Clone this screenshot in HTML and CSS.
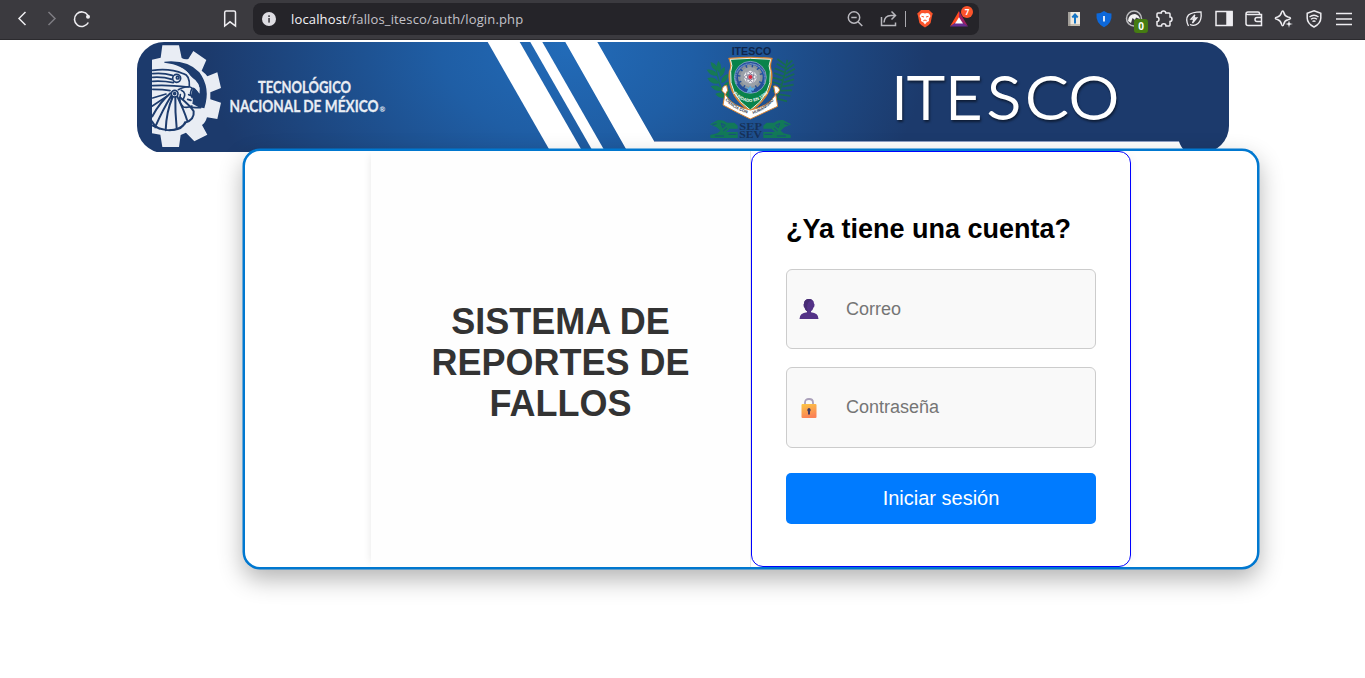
FILE: index.html
```html
<!DOCTYPE html>
<html lang="es">
<head>
<meta charset="utf-8">
<title>Sistema de reportes de fallos</title>
<link rel="stylesheet" href="styles.css">
</head>
<body>
<header class="toolbar">
  <div class="nav">
    <svg class="icon" viewBox="0 0 20 20"><path d="M13.5 4 L7 10.500 L13.500 17" transform="translate(0 -1)"/></svg>
    <svg class="icon dim" viewBox="0 0 20 20"><path d="M6.500 3 L13 9.500 L6.500 16"/></svg>
    <svg class="icon" viewBox="0 0 20 20"><path d="M16.300 13.500 A7.300 7.300 0 1 1 15.800 6.100" stroke-width="1.600"/><circle cx="16" cy="7.800" r="2" class="fill" stroke="none"/></svg>
  </div>
  <svg class="icon" viewBox="0 0 20 20"><path d="M4.700 3.500 Q4.700 2 6.200 2 H14 Q15.500 2 15.500 3.500 V17 L10 12.800 L4.700 17 Z"/></svg>
  <div class="urlbar">
    <svg class="info" viewBox="0 0 14 14"><circle cx="7" cy="7" r="7" fill="#dedde2"/><rect x="6.200" y="6" width="1.700" height="4.600" fill="#4a494f"/><rect x="6.200" y="3.300" width="1.700" height="1.700" fill="#4a494f"/></svg>
    <p class="url"><span class="host">localhost</span>/fallos_itesco/auth/login.php</p>
    <div class="urltools">
      <svg class="icon soft" viewBox="0 0 20 20"><circle cx="9" cy="8.500" r="5.700"/><path d="M6.300 8.500 H11.700 M13 12.800 L17.300 17"/></svg>
      <svg class="icon soft" viewBox="0 0 20 20"><path d="M2.500 8 V16.500 H16.500 V13.500 M5 13.500 Q5.500 6.500 12 6.500 H16.500 M12.500 2.500 L16.500 6.500 L12.500 10.500"/></svg>
      <span class="divider"></span>
      <svg class="icon" viewBox="0 0 20 20"><path d="M6 1 H14 L16 3 L17.800 4.500 L17 7 L15.600 14 Q14.500 16 10 18.500 Q5.500 16 4.400 14 L3 7 L2.200 4.500 L4 3 Z" fill="#fb542b" stroke="none"/><path d="M6 4.500 L8 4 L10 4.600 L12 4 L14 4.500 L15.500 7 L13.800 10 L14 12 L11.500 13.500 L10 15.500 L8.500 13.500 L6 12 L6.200 10 L4.500 7 Z" fill="#fff" stroke="none"/><path d="M6.500 7.300 L9 8 M13.500 7.300 L11 8 M8.300 11.800 L10 11 L11.700 11.800" stroke="#fb542b" stroke-width="1"/></svg>
      <span class="rewards"><svg class="icon" viewBox="0 0 20 20"><path d="M10 2 L1 17.500 L10 12 Z" fill="#ff4a20" stroke="none"/><path d="M10 2 L19 17.500 L10 12 Z" fill="#9e1f63" stroke="none"/><path d="M1 17.500 H19 L10 11 Z" fill="#662d91" stroke="none"/><path d="M10 8.300 L14 14.500 H6 Z" fill="#fff" stroke="none"/></svg><b class="badge">7</b></span>
    </div>
  </div>
  <div class="extensions">
    <svg class="icon" viewBox="0 0 20 20"><path d="M4 3 H16 V17 H4 Z" fill="#eee9df" stroke="none"/><path d="M4 3 H6.500 V17 H4 Z" fill="#a3a09b" stroke="none"/><path d="M4 16 H16" stroke="#9b9384" stroke-width="1"/><path d="M11 14.500 V6 M8.300 8.500 L11 5.500 L13.700 8.500" stroke="#1675c4" stroke-width="2"/></svg>
    <svg class="icon" viewBox="0 0 20 20"><path d="M10 2 Q13.500 4.500 17.500 4.500 Q18.500 14 10 18.300 Q1.500 14 2.500 4.500 Q6.500 4.500 10 2 Z" fill="#0d68da" stroke="none"/><path d="M10 7 V12.500" stroke="#fff" stroke-width="1.700"/></svg>
    <span class="counter"><svg class="icon" viewBox="0 0 20 20"><circle cx="10" cy="9.500" r="7.500" stroke="#bdbdc0"/><path d="M4 12 Q4.500 5 11 5 Q15 6 16 10 L12 8.500 L11 11 L8.500 9 L7 14 Z" fill="#f3f3f3" stroke="none"/></svg><b class="count">0</b></span>
    <svg class="icon" viewBox="0 0 20 20"><path d="M4 4 H7.300 Q7.300 2 9.500 2 Q11.700 2 11.700 4 H15 Q16 4 16 5 V8 Q18 8 18 10.200 Q18 12.400 16 12.400 V16 Q16 17 15 17 H12 Q12 14.800 9.800 14.800 Q7.500 14.800 7.500 17 H4 Q3 17 3 16 V12.700 Q5 12.500 5 10.300 Q5 8.200 3 8 V5 Q3 4 4 4 Z"/></svg>
    <svg class="icon" viewBox="0 0 20 20"><path d="M4.500 17 Q1 10 4.500 6 Q8 3 17 2.800 Q18 11 14 14.500 Q10.500 17.500 6 15.500 M10.800 5.800 L7 10.200 H10 L8.500 14 L12.800 9 H9.900 Z" stroke-width="1.300"/></svg>
    <svg class="icon" viewBox="0 0 20 20"><path d="M2 2.500 H18 V16.500 H2 Z"/><path d="M13 3 H18 V16 H13 Z" class="fill"/></svg>
    <svg class="icon" viewBox="0 0 20 20"><path d="M15.500 5.500 V4.500 Q15.500 3 14 3 H4 Q2 3 2 5 V14.500 Q2 16.500 4 16.500 H17.500 V5.500 H4 Q2 5.500 2 4.500 M17.500 8.500 H13 Q11 8.500 11 10.500 Q11 12.500 13 12.500 H17.500"/></svg>
    <svg class="icon" viewBox="0 0 20 20"><path d="M8.700 2 Q9.500 2 9.800 3.500 Q10.500 7 14 8 Q16.500 8.500 16.500 9.300 Q16.500 10 14 10.800 Q10.500 11.500 9.800 15 Q9.500 16.800 8.700 16.800 Q8 16.800 7.500 15 Q6.500 11.500 3.500 10.500 Q1.300 10 1.300 9.300 Q1.300 8.500 3.500 8 Q6.500 7 7.500 3.500 Q8 2 8.700 2 Z"/><path d="M15 11 L16 14 L19 15 L16 16 L15 19 L14 16 L11 15 L14 14 Z" class="fill" stroke="#3b3a3f" stroke-width=".4"/></svg>
    <svg class="icon" viewBox="0 0 20 20"><path d="M10 1.800 L16.800 4.200 V9 Q16.800 14.500 10 18 Q3.200 14.500 3.200 9 V4.200 Z"/><path d="M5.500 8 Q10 4.500 14.500 8 M7 10.300 Q10 8 13 10.300 M8.500 12.500 Q10 11.500 11.500 12.500" stroke-width="1.400"/></svg>
    <svg class="icon" viewBox="0 0 20 20"><path d="M2 4.500 H18 M2 10 H18 M2 15.500 H18"/></svg>
  </div>
</header>

<main class="page">
  <svg class="banner" viewBox="0 0 1092 110">
    <defs>
      <radialGradient id="sky" gradientUnits="userSpaceOnUse" cx="430" cy="5" r="360" gradientTransform="translate(430 5) scale(1 .72) translate(-430 -5)">
        <stop offset="0" stop-color="#226bb8"/><stop offset=".35" stop-color="#1f5ea5"/><stop offset="1" stop-color="#1c3a6c"/>
      </radialGradient>
      <clipPath id="round"><rect width="1092" height="111" rx="27"/></clipPath>
      <path id="arcLow" d="M130 166 Q180 220 240 160"/>
      <path id="arcTop" d="M142 137 A42 42 0 1 1 220 137"/>
      <path id="ribbonL" d="M106 185 Q130 215 180 229"/>
      <path id="ribbonR" d="M189 228 Q232 214 257 180"/>
    </defs>
    <g clip-path="url(#round)">
      <rect width="1092" height="111" fill="url(#sky)"/>
      <g fill="#fff">
        <path d="M350.700 0 H382.700 L445.700 110 H413.700 Z"/>
        <path d="M393.300 0 H405.300 L468.300 110 H456.300 Z"/>
        <path d="M428.300 0 H460.300 L517.300 99.500 H1042 Q1044 106 1050 111 H491.300 Z"/>
      </g>
      <path d="M517 99.500 H1042" stroke="#8d9fc4"/>

      <!-- gear with the eagle warrior -->
      <g transform="translate(-7 -4) scale(.33333)" fill="none" stroke="#1d3c6e" stroke-width="5" stroke-linecap="round">
        <path stroke="none" fill="#e9edf4" d="M97 22 H147 L155 60 Q165 66 175 63 L190 39 L229 66 L215 98 Q228 108 232 115 L262 103 L273 150 L241 163 V184 L273 194 L262 243 L231 238 Q226 255 216 261 L232 290 L193 310 L168 284 L152 291 L147 327 H97 L91 290 L66 286 V65 L92 59 Z"/>
        <path stroke="none" fill="#1d3c6e" d="M103 71 Q172 64 208 103 Q243 150 223 211 Q204 209 187 197 Q191 181 184 173 L188 150 Q193 142 206 164 Q212 150 203 137 Q190 122 180 112 Q160 80 103 74 Z"/>
        <path stroke="none" fill="#e9edf4" d="M120 82 Q166 86 182 116 Q214 133 209 167 Q196 148 181 144 Q178 111 158 108 Q140 95 105 94 Z"/>
        <path d="M68 97 Q120 90 160 107 Q180 112 178 145 M68 107 Q100 104 127 112 M68 118 Q100 116 126 124 M68 130 Q100 128 130 134 M68 143 Q110 140 175 147 M68 154 Q100 154 120 158"/>
        <circle cx="140" cy="121" r="12"/><circle cx="143" cy="119" r="4"/>
        <circle cx="134" cy="167" r="10"/><circle cx="134" cy="167" r="3"/>
        <path d="M145 155 Q175 140 187 151 Q177 165 186 178 M151 170 Q145 195 160 207 Q173 210 186 204 M154 157 Q171 165 160 183 M176 170 L184 173 M173 184 L183 187"/>
        <path d="M121 166 Q88 195 67 235 M124 173 Q98 215 75 268 M128 177 Q109 220 107 277 M136 178 Q135 220 140 270 M142 176 Q163 220 171 246 M150 178 Q184 207 191 220 Q194 244 166 254 M68 263 Q130 293 165 257 M66 250 Q73 265 88 272" stroke-width="6"/>
        <path d="M68 180 L108 168 M67 204 L112 174 M120 276 Q158 278 165 252 M187 208 Q196 209 212 209"/>
      </g>

      <g class="tecnm">
        <text x="121" y="51.300" textLength="93" lengthAdjust="spacingAndGlyphs">TECNOLÓGICO</text>
        <text x="92.500" y="69.600" textLength="149" lengthAdjust="spacingAndGlyphs">NACIONAL DE MÉXICO</text>
        <text class="reg" x="242.500" y="69.600">®</text>
      </g>

      <!-- school crest -->
      <g transform="translate(553 -4) scale(.33333)">
        <text class="crest-name" x="125" y="51" textLength="119" lengthAdjust="spacingAndGlyphs">ITESCO</text>
        <g fill="#167a55">
          <path d="M62 72 Q84 78 82 98 Q62 93 62 72 M85 68 Q100 85 87 104 Q74 88 85 68 M50 95 Q74 91 84 113 Q62 117 50 95 M104 86 Q108 106 90 118 Q82 99 104 86 M52 120 Q75 113 89 136 Q63 142 52 120 M115 107 Q114 131 94 136 Q91 115 115 107 M62 145 Q84 136 98 156 Q78 165 62 145 M117 130 Q117 151 99 157 Q96 138 117 130 M76 168 Q95 158 105 176 Q92 186 76 168 M118 150 V178 L98 174 Z"/>
          <path d="M76 84 Q87 140 112 207" stroke="#167a55" stroke-width="4" fill="none"/>
        </g>
        <path d="M292 66 Q280 145 249 209 M289 83 L262 63 M289 93 L260 77 M287 104 L254 91 M284 116 L252 105 M281 128 L249 119 M277 141 L248 132 M273 153 L247 145 M268 166 L248 158 M290 83 L307 67 M289 95 L312 79 M286 108 L315 92 M284 120 L313 108 M281 133 L312 124 M277 146 L311 140 M273 158 L306 157 M268 169 L301 174 M262 182 L291 190" fill="none" stroke="#176b50" stroke-width="5"/>
        <path d="M118 62 Q181 55 245 62 Q237 85 244 101 Q253 170 181 220 Q111 171 119 101 Q127 84 118 62 Z" fill="#08834b" stroke="#d78533" stroke-width="5"/>
        <path d="M121 64 Q181 58 242 64 Q233 85 241 101 Q247 170 181 216 Q115 170 122 101 Q130 84 121 64 Z" fill="none" stroke="#f5f5ed" stroke-width="3"/>
        <circle cx="181" cy="118" r="48" fill="#244f9b" stroke="#d6e2ee" stroke-width="1.500"/>
        <circle cx="181" cy="117" r="31" fill="none" stroke="#8a9299" stroke-width="12" stroke-dasharray="13 4"/>
        <circle cx="181" cy="117" r="30" fill="#9ba1a8"/><circle cx="181" cy="117" r="19" fill="#eef0f2"/>
        <g fill="none" stroke="#6e6b86" stroke-width="2"><ellipse cx="181" cy="117" rx="18" ry="7"/><ellipse cx="181" cy="117" rx="18" ry="7" transform="rotate(60 181 117)"/><ellipse cx="181" cy="117" rx="18" ry="7" transform="rotate(120 181 117)"/></g>
        <circle cx="181" cy="117" r="6" fill="#db2740"/>
        <path d="M166 145 L176 150 L181 143 L186 151 L195 147 L190 159 L183 157 L187 166 L176 163 L169 166 L174 154 Z" fill="#59a9de"/>
        <text class="tiny"><textPath href="#arcTop">INSTITUTO TECNOLÓGICO SUPERIOR DE COATZACOALCOS</textPath></text>
        <text class="founded"><textPath href="#arcLow">FUNDADO EN 1999</textPath></text>
        <path d="M110 142 Q97 143 96 158 Q101 162 105 168 L99 201 Q145 226 181 243 Q218 226 263 205 L257 168 Q267 165 269 156 Q264 142 251 144 L256 171 Q234 207 181 216 Q127 206 106 170 L113 157 Z" fill="#fff" stroke="#d68435" stroke-width="3"/>
        <text class="motto"><textPath href="#ribbonL">CIENCIA CON</textPath></text>
        <text class="motto"><textPath href="#ribbonR">HUMANISMO</textPath></text>
        <g id="serpent" fill="#127958">
          <path d="M60 259 L84 246 Q101 244 111 254 H133 L143 263 V272 H119 L108 282 H143 V300 H61 V291 L82 286 L91 278 L80 268 Z"/>
          <path d="M94 256 L106 262 L98 269 Z M67 260 L80 257 M100 279 L111 270 M116 289 H139 M75 294 H102" stroke="#1c4a86" stroke-width="3" fill="none"/>
        </g>
        <use href="#serpent" transform="translate(363 0) scale(-1 1)"/>
        <text class="sep" x="148" y="276" textLength="68" lengthAdjust="spacingAndGlyphs">SEP</text>
        <text class="sep" x="148" y="299" textLength="68" lengthAdjust="spacingAndGlyphs">SEV</text>
      </g>
      <text class="wordmark" transform="scale(1.06 1)" x="711.500 727 762.500 802 838 879" y="77">ITESCO</text>
    </g>
  </svg>

  <section class="card">
    <div class="intro"><h1>SISTEMA DE REPORTES DE FALLOS</h1></div>
    <form class="login">
      <h2>¿Ya tiene una cuenta?</h2>
      <label class="field">
        <svg class="glyph" viewBox="0 0 20 20"><path d="M10 0 Q14.800 0 15 4.500 Q16 5 15.300 7.500 Q14.800 8.500 14.500 8.500 Q13.500 12 12 12.300 V13.300 Q19.500 14 19.500 20 H.5 Q.5 14 8 13.300 V12.300 Q6.500 12 5.500 8.500 Q5.200 8.500 4.700 7.500 Q4 5 5 4.500 Q5.200 0 10 0 Z" fill="#533287"/><path d="M5 4.500 Q5.500 0 10 0 Q12 0 13 1 Q8 2 8 9 L9 12.500 Q6.500 12 5.500 8.500 Z" fill="#472c74"/></svg>
        <input type="text" placeholder="Correo">
      </label>
      <label class="field second">
        <svg class="glyph" viewBox="0 0 20 20"><defs><linearGradient id="gold" x2=".3" y2="1"><stop stop-color="#fcc744"/><stop offset="1" stop-color="#fb8356"/></linearGradient></defs><path d="M6 7 V4.500 Q6 1 10 1 Q14 1 14 4.500 V7" fill="none" stroke="#aaa0ba" stroke-width="1.800"/><rect x="2.500" y="6" width="15" height="14" rx="1" fill="url(#gold)"/><path d="M10 10 A2 2 0 0 1 11 13.500 V16.500 H9 V13.500 A2 2 0 0 1 10 10 Z" fill="#433b61"/></svg>
        <input type="password" placeholder="Contraseña">
      </label>
      <button type="button">Iniciar sesión</button>
    </form>
  </section>
</main>
</body>
</html>
```

FILE: styles.css
```css
* { box-sizing: border-box; }

body {
  margin: 0;
  min-height: 100vh;
  background: #fff;
  font-family: "Liberation Sans", Arial, sans-serif;
}

/* Browser toolbar */
.toolbar {
  display: flex;
  align-items: center;
  height: 40px;
  padding: 0 11px 2px 12px;
  background: #3b3a3f;
  border-bottom: 1px solid #2b2a2e;
}

.nav { display: flex; gap: 10px; margin-right: 128px; }

.icon {
  display: block;
  flex: none;
  width: 20px;
  height: 20px;
  fill: none;
  stroke: #eeedf1;
  stroke-width: 1.5;
}
.icon .fill { fill: #eeedf1; }
.dim { stroke: #7d7c82; }
.soft { stroke: #b9b8be; }

.urlbar {
  display: flex;
  align-items: center;
  width: 726px;
  height: 32px;
  margin-left: 13px;
  padding: 0 10px 0 9px;
  border-radius: 8px;
  background: #252429;
}
.info { width: 14px; height: 14px; }
.url {
  margin: 0 0 0 15px;
  font: 13px/18px "Open Sans", "Noto Sans", sans-serif;
  letter-spacing: .15px;
  color: #c4c3c9;
}
.host { color: #f4f3f7; }
.urltools { display: flex; align-items: center; margin-left: auto; }
.urltools .icon + .icon { margin-left: 14px; }
.divider { width: 1px; height: 16px; margin: 0 9px 0 6px; background: #aaa9af; }
.rewards, .counter { position: relative; }
.rewards { margin-left: 14px; }

.badge {
  position: absolute;
  top: -3px;
  right: -4px;
  width: 12px;
  height: 12px;
  border-radius: 6px;
  background: #fb542b;
  color: #fff;
  font: bold 8px/12px "Open Sans", sans-serif;
  text-align: center;
}
.count {
  position: absolute;
  left: 10px;
  top: 10px;
  width: 14px;
  height: 14px;
  border-radius: 3px;
  background: #457c12;
  color: #fff;
  font: bold 10px/14px "Open Sans", sans-serif;
  text-align: center;
}
.extensions { display: flex; gap: 10px; margin-left: auto; }

/* Institutional banner */
.banner {
  display: block;
  width: 1092px;
  height: 110px;
  margin: 2px 0 0 137px;
}
.tecnm {
  fill: #e9edf4;
  stroke: #e9edf4;
  stroke-width: .3px;
  font: bold 17.500px Lato, sans-serif;
}
.reg { font-size: 7px; stroke: none; }
.crest-name { font: bold 33px "Liberation Sans", sans-serif; fill: #10264b; }
.tiny { font: bold 5.500px "Liberation Sans", sans-serif; fill: #c7d6e8; }
.founded { font: bold 13px "Liberation Sans", sans-serif; fill: #fff; }
.motto { font: bold 12px "Liberation Sans", sans-serif; fill: #263142; }
.sep { font: bold 31px "Liberation Serif", serif; fill: #173158; }
.wordmark {
  font: 300 60px Lato, sans-serif;
  fill: #fff;
  stroke: #fff;
  stroke-width: 1.8px;
  filter: drop-shadow(1.5px 2px 1px rgba(0, 0, 0, .5));
}

/* Login card */
.card {
  position: relative;
  display: flex;
  justify-content: center;
  width: 1016px;
  height: 420px;
  margin: -3px 0 0 243px;
  border: 2px solid #0078d0;
  border-radius: 17px;
  background: #fff;
  box-shadow: 0 0 0 .5px #0078d0, 0 10px 25px rgba(0, 0, 0, .3);
}
.intro {
  display: flex;
  align-items: center;
  justify-content: center;
  width: 380px;
  padding: 7px 50px 0;
  background: #fefefe;
  border-right: 1px solid #e7e7e7;
  box-shadow: -5px 0 8px -5px rgba(0, 0, 0, .1);
}
h1 {
  margin: 0;
  color: #333;
  font-size: 36px;
  line-height: 41px;
  text-align: center;
}
.login {
  display: flex;
  flex-direction: column;
  width: 380px;
  padding: 62px 34px 0;
  border: 1px solid #00f;
  border-radius: 12px;
  background: #fff;
  box-shadow: 5px 0 10px -4px rgba(0, 0, 0, .05);
}
h2 {
  margin: 0 0 24px;
  font-size: 27px;
  line-height: 31px;
  white-space: nowrap;
}
.field {
  display: flex;
  align-items: center;
  height: 80px;
  padding-left: 12px;
  border: 1px solid #ccc;
  border-radius: 6px;
  background: #f9f9f9;
}
.field.second { height: 81px; margin-top: 17.5px; }
.glyph { flex: none; width: 20px; height: 20px; margin-right: 27px; }
.second .glyph { margin-top: 1px; }
input {
  width: 230px;
  padding: 0;
  border: 0;
  outline: 0;
  background: none;
  font: 18px "Liberation Sans", Arial, sans-serif;
}
input::placeholder { color: #757575; }
button {
  height: 51px;
  margin-top: 25.5px;
  border: 0;
  border-radius: 5px;
  background: #007bff;
  color: #fff;
  font: 20px "Liberation Sans", Arial, sans-serif;
}
```
